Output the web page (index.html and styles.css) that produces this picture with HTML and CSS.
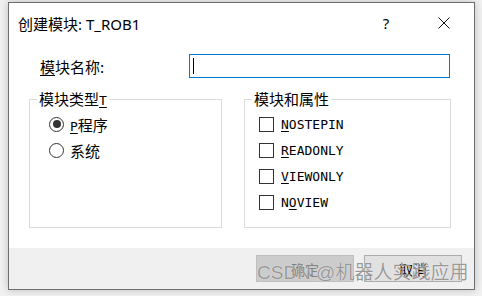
FILE: index.html
```html
<!DOCTYPE html>
<html lang="zh-CN">
<head>
  <meta charset="UTF-8">
  <meta name="viewport" content="width=device-width, initial-scale=1.0">
  <title>创建模块</title>
  <link rel="stylesheet" href="styles.css">
</head>
<body>
  <div class="dialog">
    <div class="titlebar">
      <span class="title">创建模块: T_ROB1</span>
      <span class="help">?</span>
      <span class="close">
        <svg width="12" height="12" viewBox="0 0 12 12">
          <path d="M0.5 0.5 L11.5 11.5 M11.5 0.5 L0.5 11.5" stroke="#111" stroke-width="1" fill="none"/>
        </svg>
      </span>
    </div>

    <div class="content">
      <div class="namerow">
        <label class="namelabel"><u>模</u>块名称:</label>
        <div class="nameinput"><span class="caret"></span></div>
      </div>

      <div class="groups">
        <fieldset class="group typegroup">
          <legend>模块类型<u class="latin">T</u></legend>
          <div class="options">
            <div class="option">
              <span class="radio checked"></span>
              <span class="optlabel"><u class="latin">P</u>程序</span>
            </div>
            <div class="option">
              <span class="radio"></span>
              <span class="optlabel">系统</span>
            </div>
          </div>
        </fieldset>

        <fieldset class="group attrgroup">
          <legend>模块和属性</legend>
          <div class="options">
            <div class="option">
              <span class="check"></span>
              <span class="optlabel latin"><u>N</u>OSTEPIN</span>
            </div>
            <div class="option">
              <span class="check"></span>
              <span class="optlabel latin"><u>R</u>EADONLY</span>
            </div>
            <div class="option">
              <span class="check"></span>
              <span class="optlabel latin"><u>V</u>IEWONLY</span>
            </div>
            <div class="option">
              <span class="check"></span>
              <span class="optlabel latin">N<u>O</u>VIEW</span>
            </div>
          </div>
        </fieldset>
      </div>
    </div>

    <div class="footer">
      <button class="btn" disabled>确定</button>
      <button class="btn">取消</button>
    </div>
  </div>

  <div class="watermark">CSDN @机器人实践应用</div>
</body>
</html>
```

FILE: styles.css
```css
* {
  box-sizing: border-box;
}

body {
  margin: 0;
  padding: 2px 0 0 8px;
  background: #f1f1f1;
  font-family: "Noto Sans CJK SC", sans-serif;
  color: #000;
  width: 482px;
  height: 296px;
  overflow: hidden;
  position: relative;
}

.dialog {
  width: 467px;
  height: 288px;
  border: 1px solid #6e6e6e;
  background: #fff;
  box-shadow: 0 0 8px rgba(0, 0, 0, 0.22);
  display: flex;
  flex-direction: column;
}

/* title bar */
.titlebar {
  height: 40px;
  display: flex;
  align-items: center;
  padding-left: 9px;
}

.title {
  font-family: "Noto Sans", "Noto Sans CJK SC", sans-serif;
  font-size: 15px;
  flex: 1;
}

.help {
  font-family: "Noto Sans", sans-serif;
  font-size: 15px;
  width: 46px;
  text-align: center;
  margin-right: 12px;
}

.close {
  width: 46px;
  display: flex;
  justify-content: center;
  margin-right: 7px;
}

.close svg {
  display: block;
}

/* content */
.content {
  flex: 1;
  padding: 11px 23px 0 20px;
}

.namerow {
  display: flex;
  align-items: center;
  height: 24px;
  padding-left: 11px;
}

.namelabel {
  width: 149px;
  font-size: 15px;
}

u {
  text-decoration-thickness: 1px;
  text-underline-offset: 2px;
}

.nameinput {
  width: 261px;
  height: 24px;
  border: 1px solid #0078d7;
  padding: 3px 0 0 3px;
}

.caret {
  display: block;
  width: 1px;
  height: 16px;
  background: #000;
}

.groups {
  display: flex;
  gap: 22px;
  margin-top: 11px;
}

.group {
  margin: 0;
  border: 1px solid #dcdcdc;
  height: 139px;
  padding: 0;
  flex: none;
}

.group legend {
  font-size: 15px;
  line-height: 20px;
  padding: 0 2px;
  margin-left: 7px;
}

.typegroup {
  width: 193px;
}

.attrgroup {
  width: 207px;
}

.options {
  margin-top: 2px;
}

.typegroup .options {
  padding-left: 19px;
}

.attrgroup .options {
  padding-left: 14px;
}

.option {
  display: flex;
  align-items: center;
  height: 26px;
}

.optlabel {
  font-size: 15px;
  margin-left: 6px;
}

.latin {
  font-family: "DejaVu Sans Mono", monospace;
  font-size: 13px;
  line-height: 1;
}

.attrgroup .optlabel {
  margin-left: 7px;
}

.radio {
  width: 15px;
  height: 15px;
  border: 1px solid #333;
  border-radius: 50%;
  display: flex;
  align-items: center;
  justify-content: center;
}

.radio.checked::after {
  content: "";
  width: 8px;
  height: 8px;
  border-radius: 50%;
  background: #333;
}

.check {
  width: 15px;
  height: 15px;
  border: 1px solid #333;
}

/* footer */
.footer {
  height: 41px;
  background: #f0f0f0;
  display: flex;
  justify-content: flex-end;
  gap: 10px;
  padding: 7px 12px 0 0;
}

.btn {
  width: 98px;
  height: 27px;
  border: 1px solid #adadad;
  background: #e1e1e1;
  font-family: "Noto Sans CJK SC", sans-serif;
  font-size: 14px;
  color: #000;
  padding: 0;
}

.btn:disabled {
  background: #cccccc;
  border-color: #bfbfbf;
  color: #838383;
}

.watermark {
  position: absolute;
  left: 257px;
  top: 261px;
  font-family: "Liberation Sans", "Noto Sans CJK SC", sans-serif;
  font-size: 19px;
  line-height: 24px;
  color: rgba(120, 120, 120, 0.75);
  text-shadow: 0 0 1px #fff;
  white-space: nowrap;
}
```
